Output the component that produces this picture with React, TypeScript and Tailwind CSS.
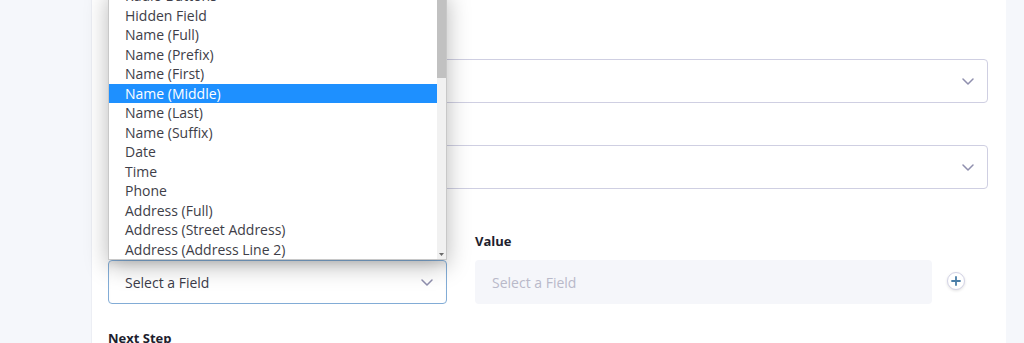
/**
 * Conditional logic editor with an open field picker
 */

const fieldOptions = [
  'Radio Buttons',
  'Hidden Field',
  'Name (Full)',
  'Name (Prefix)',
  'Name (First)',
  'Name (Middle)',
  'Name (Last)',
  'Name (Suffix)',
  'Date',
  'Time',
  'Phone',
  'Address (Full)',
  'Address (Street Address)',
  'Address (Address Line 2)',
];

function Chevron() {
  return (
    <svg width="12" height="7" viewBox="0 0 12 7" fill="none" className="shrink-0">
      <polyline points="1,1 6,6 11,1" stroke="#8f8fae" strokeWidth="1.5" strokeLinecap="round" strokeLinejoin="round" />
    </svg>
  );
}

function SelectBox({ children }: { children?: React.ReactNode }) {
  return (
    <div className="h-[44px] w-full rounded-[4px] border border-[#cfcfe2] bg-white flex items-center justify-between pl-[17px] pr-[13px]">
      <span className="text-[14px] text-[#3c3c4a]">{children}</span>
      <Chevron />
    </div>
  );
}

function FieldDropdown() {
  return (
    <div className="absolute left-0 bottom-full w-[339px] h-[270px] bg-white border border-[#c8c8c8] shadow-[0_6px_22px_rgba(0,0,0,0.28)] flex overflow-hidden">
      <ul className="flex-1 flex flex-col justify-end">
        {fieldOptions.map((opt) => (
          <li
            key={opt}
            className={
              opt === 'Name (Middle)'
                ? 'h-[19.5px] shrink-0 flex items-center pl-[16px] text-[14px] bg-[#1e90ff] text-white'
                : 'h-[19.5px] shrink-0 flex items-center pl-[16px] text-[14px] text-[#3e3e48]'
            }
          >
            {opt}
          </li>
        ))}
      </ul>
      {/* scrollbar */}
      <div className="w-[9px] bg-[#f1f1f1] flex flex-col justify-between">
        <div className="h-[87px] bg-[#c1c1c1]" />
        <div className="h-[10px] flex items-center justify-center">
          <svg width="5" height="3" viewBox="0 0 5 3">
            <polygon points="0,0 5,0 2.5,3" fill="#6b6b6b" />
          </svg>
        </div>
      </div>
    </div>
  );
}

export default function App() {
  return (
    <div className="w-[1024px] h-[343px] overflow-hidden bg-[#f5f7fb] flex font-['Open_Sans','Noto_Sans',sans-serif]">
      <div className="w-[91px] shrink-0" />

      <div className="flex-1 min-w-0 bg-white border-l border-[#eceef4] pl-[16px] pr-[18px] pt-[31px]">
        {/* labels sit under the open list */}
        <div className="h-[20px] mb-[8px]" />
        <SelectBox />

        <div className="h-[20px] mt-[14px] mb-[8px]" />
        <SelectBox />

        <div className="mt-[42px] flex items-end">
          <div className="w-[339px] shrink-0 mr-[28px]">
            <div className="h-[20px] mb-[9px]" />
            <div className="relative">
              <FieldDropdown />
              <div className="h-[44px] mt-[1px] rounded-[4px] border border-[#82acd6] bg-white shadow-[inset_0_8px_10px_-6px_rgba(0,0,0,0.12)] flex items-center justify-between pl-[16px] pr-[13px]">
                <span className="text-[14px] text-[#3c3c4a]">Select a Field</span>
                <Chevron />
              </div>
            </div>
          </div>

          <div className="w-[457px] shrink-0">
            <label className="block h-[20px] mb-[9px] text-[13px] font-bold leading-[20px] text-[#1e1e2e]">Value</label>
            <div className="h-[44px] rounded-[4px] bg-[#f5f6fa] flex items-center pl-[17px]">
              <span className="text-[14px] text-[#b9b9c9]">Select a Field</span>
            </div>
          </div>

          <div className="h-[46px] flex items-center pl-[15px]">
            <button className="w-[18px] h-[18px] rounded-full border border-[#d3d3e6] bg-white shadow-[0_1px_3px_rgba(0,0,0,0.12)] flex items-center justify-center">
              <svg width="10" height="10" viewBox="0 0 10 10">
                <path d="M5 1v8M1 5h8" stroke="#4a7ea8" strokeWidth="1.8" strokeLinecap="round" />
              </svg>
            </button>
          </div>
        </div>

        <label className="block mt-[25px] text-[13px] font-bold text-[#1e1e2e]">Next Step</label>
      </div>

      <div className="w-[18px] shrink-0" />
    </div>
  );
}
